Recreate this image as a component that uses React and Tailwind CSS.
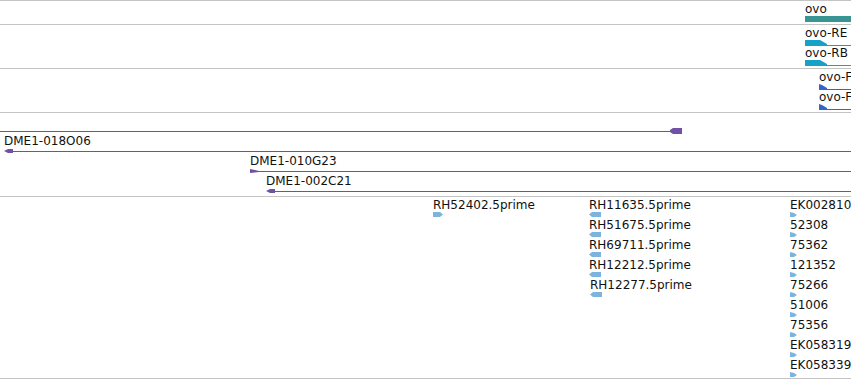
import React from "react";

// feature rows: label on top, glyph 15px below, 20px per row
const tracks = [
  {
    h: 24,
    features: [
      { row: 0, x: 805, label: "ovo", glyph: "gene" },
    ],
  },
  {
    h: 44,
    features: [
      { row: 0, x: 805, label: "ovo-RE", glyph: "tx" },
      { row: 1, x: 805, label: "ovo-RB", glyph: "tx" },
    ],
  },
  {
    h: 44,
    features: [
      { row: 0, x: 819, label: "ovo-F", glyph: "txf" },
      { row: 1, x: 819, label: "ovo-F", glyph: "txf" },
    ],
  },
  {
    h: 84,
    features: [
      { row: 0, x: 670, glyph: "clone-end" },
      { row: 1, x: 4, label: "DME1-018O06", glyph: "clone-left" },
      { row: 2, x: 250, label: "DME1-010G23", glyph: "clone-right" },
      { row: 3, x: 266, label: "DME1-002C21", glyph: "clone-left" },
    ],
  },
  {
    h: 182,
    features: [
      { row: 0, x: 433, label: "RH52402.5prime", glyph: "est-right" },
      { row: 0, x: 589, label: "RH11635.5prime", glyph: "est-left" },
      { row: 1, x: 589, label: "RH51675.5prime", glyph: "est-left" },
      { row: 2, x: 589, label: "RH69711.5prime", glyph: "est-left" },
      { row: 3, x: 589, label: "RH12212.5prime", glyph: "est-left" },
      { row: 4, x: 590, label: "RH12277.5prime", glyph: "est-left" },
      { row: 0, x: 790, label: "EK002810", glyph: "est-small" },
      { row: 1, x: 790, label: "52308", glyph: "est-small" },
      { row: 2, x: 790, label: "75362", glyph: "est-small" },
      { row: 3, x: 790, label: "121352", glyph: "est-small" },
      { row: 4, x: 790, label: "75266", glyph: "est-small" },
      { row: 5, x: 790, label: "51006", glyph: "est-small" },
      { row: 6, x: 790, label: "75356", glyph: "est-small" },
      { row: 7, x: 790, label: "EK058319", glyph: "est-small" },
      { row: 8, x: 790, label: "EK058339", glyph: "est-small" },
    ],
  },
];

const W = 851;

function Glyph({ type, x, y }) {
  const purple = "#6f51a6";
  const est = "#7db4de";
  switch (type) {
    case "gene":
      return <rect x={x} y={y} width={W - x} height={6} fill="#3b9494" />;
    case "tx":
      return (
        <g fill="#17a1c6">
          <polygon points={`${x},${y} ${x + 15},${y} ${x + 22},${y + 4} ${x + 22},${y + 6} ${x},${y + 6}`} />
          <rect x={x + 21} y={y + 5} width={W - x} height={1} />
        </g>
      );
    case "txf":
      return (
        <g fill="#3465c9">
          <polygon points={`${x},${y} ${x + 3},${y + 1} ${x + 8},${y + 4} ${x + 8},${y + 6} ${x},${y + 6}`} />
          <rect x={x + 7} y={y + 5} width={W - x} height={1} />
        </g>
      );
    case "clone-end":
      return (
        <g fill={purple}>
          <rect x={0} y={y + 3} width={x + 2} height={1} />
          <polygon points={`${x},${y + 2} ${x + 3},${y} ${x + 12},${y} ${x + 12},${y + 6} ${x + 3},${y + 6} ${x},${y + 4}`} />
        </g>
      );
    case "clone-left":
      return (
        <g fill={purple}>
          <polygon points={`${x},${y + 3} ${x + 4},${y + 1} ${x + 9},${y + 1} ${x + 9},${y + 5} ${x + 4},${y + 5}`} />
          <rect x={x + 8} y={y + 3} width={W - x} height={1} />
        </g>
      );
    case "clone-right":
      return (
        <g fill={purple}>
          <polygon points={`${x},${y + 1} ${x + 5},${y + 2} ${x + 9},${y + 3} ${x + 9},${y + 4} ${x + 5},${y + 4.5} ${x},${y + 5}`} />
          <rect x={x + 8} y={y + 3} width={W - x} height={1} />
        </g>
      );
    case "est-right":
      return <polygon fill={est} points={`${x},${y} ${x + 7},${y} ${x + 10},${y + 2.5} ${x + 7},${y + 5} ${x},${y + 5}`} />;
    case "est-left":
      return <polygon fill={est} points={`${x},${y + 2.5} ${x + 3},${y} ${x + 12},${y} ${x + 12},${y + 5} ${x + 3},${y + 5}`} />;
    case "est-small":
      return <polygon fill={est} points={`${x},${y} ${x + 4},${y + 1} ${x + 7},${y + 3} ${x + 4},${y + 5} ${x},${y + 5}`} />;
    default:
      return null;
  }
}

function Track({ h, features }) {
  return (
    <div className="relative border-b border-[#c4c4c4]" style={{ height: h }}>
      <svg className="absolute left-0 top-0" width={W} height={h}>
        {features.map((f, i) => (
          <Glyph key={i} type={f.glyph} x={f.x} y={f.row * 20 + 15} />
        ))}
      </svg>
      {features
        .filter((f) => f.label)
        .map((f, i) => (
          <span
            key={i}
            className="absolute whitespace-nowrap text-[12px] leading-[14px] text-[#111]"
            style={{ left: f.x, top: f.row * 20 + 1 }}
          >
            {f.label}
          </span>
        ))}
    </div>
  );
}

export default function App() {
  return (
    <div className="w-[851px] h-[380px] overflow-hidden bg-white font-['DejaVu_Sans',sans-serif]">
      <div className="h-px bg-[#c4c4c4]" />
      {tracks.map((t, i) => (
        <Track key={i} h={t.h} features={t.features} />
      ))}
    </div>
  );
}
